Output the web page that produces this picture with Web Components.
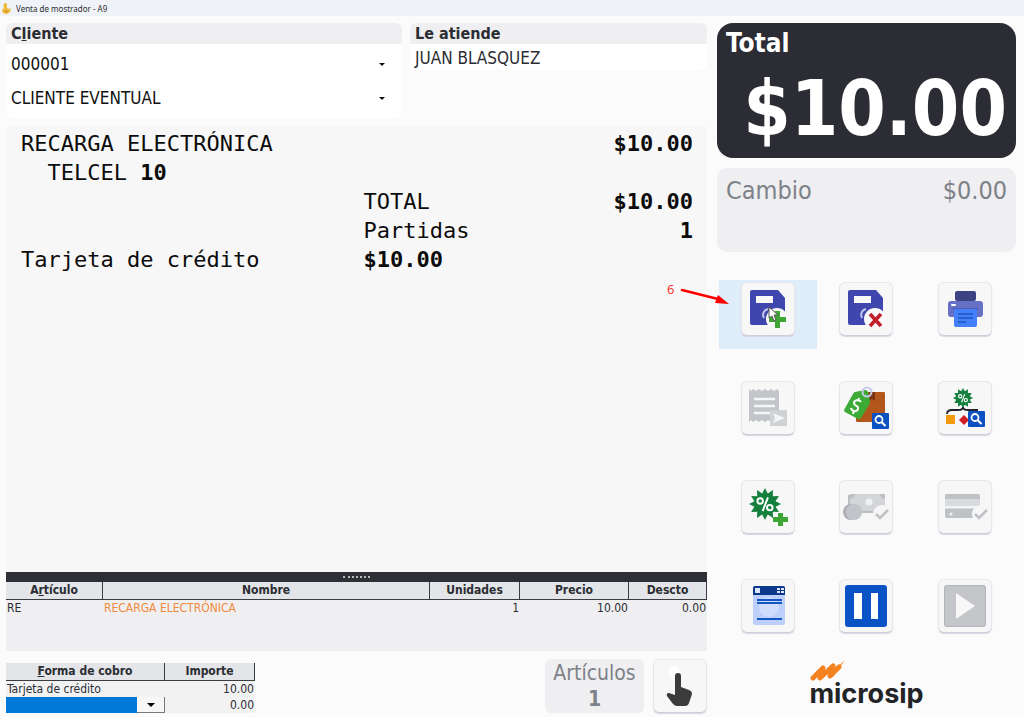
<!DOCTYPE html>
<html lang="es">
<head>
<meta charset="utf-8">
<meta name="viewport" content="width=device-width, initial-scale=1">
<title>Venta de mostrador - A9</title>
<style>
    body {
        margin: 0;
        background: #fbfbfb;
        color: #2b2d33;
        font-family: "DejaVu Sans Condensed", "DejaVu Sans", sans-serif;
    }
</style>
</head>
<body>
<sale-window></sale-window>

<script>
// Starburst outline used by the discount icons
function burst(cx, cy, outer, inner, spikes) {
    const points = [];
    for (let i = 0; i < spikes * 2; i++) {
        const r = i % 2 ? inner : outer;
        const a = Math.PI * i / spikes - Math.PI / 2;
        points.push(`${(cx + r * Math.cos(a)).toFixed(1)},${(cy + r * Math.sin(a)).toFixed(1)}`);
    }
    return points.join(' ');
}

const floppy = `
    <path d="M10 7h26l7 8v25a2 2 0 0 1-2 2H10a2 2 0 0 1-2-2V9a2 2 0 0 1 2-2z" fill="#3f47ae"/>
    <path d="M14 13h17v7H14z" fill="#f8f8fa"/>
    <path d="M26 26a6 6 0 0 0-4 9" fill="none" stroke="#c3c7ea" stroke-width="2"/>
    <circle cx="35" cy="36" r="11" fill="#f8f8f8"/>
`;
const percent = (x, y, s) => `
    <g transform="translate(${x} ${y}) scale(${s})" fill="none" stroke="#fff" stroke-width="1.6">
        <circle cx="-4" cy="-2.500" r="2.300"/>
        <circle cx="4" cy="3" r="2.300"/>
        <path d="M2.500-5.500L-2 6"/>
    </g>
`;
const search = (x, y) => `
    <g transform="translate(${x} ${y})">
        <rect width="17" height="16" rx="1" fill="#0b51c1"/>
        <circle cx="7" cy="6.500" r="3.500" fill="none" stroke="#fff" stroke-width="1.800"/>
        <path d="M9.500 9l4 4" stroke="#fff" stroke-width="2.200"/>
    </g>
`;
const check = `
    <circle cx="42" cy="33" r="9" fill="#f6f6f6"/>
    <path d="M36 33l4 4 8-8" fill="none" stroke="#bfc1c4" stroke-width="2.500"/>
`;

const icons = {
    save: `${floppy}<path d="M33 28h5v6h6v5h-6v6h-5v-6h-6v-5h6z" fill="#3fa535"/>`,
    discard: `${floppy}<path d="M30 31l11 12M41 31L30 43" stroke="#c0202c" stroke-width="3.600"/>`,
    print: `
        <rect x="16" y="8" width="21" height="10" rx="2" fill="#3b4383"/>
        <rect x="9" y="18" width="35" height="16" rx="3" fill="#6670c4"/>
        <rect x="12" y="21" width="5" height="2" rx="1" fill="#fff"/>
        <rect x="14" y="25" width="25" height="2" fill="#4c5bb4"/>
        <path d="M15 26h23v16a2 2 0 0 1-2 2H17a2 2 0 0 1-2-2z" fill="#4380fb"/>
        <path d="M19 31h15M19 35h15M19 39h8" stroke="#1f54bd" stroke-width="1.500"/>
    `,
    receipt: `
        <path d="M7 7l2 2 2-2 3 2 3-2 3 2 3-2 3 2 3-2 3 2 3-2 2 2V38l-2 2-3-2-3 2-3-2-3 2-3-2-3 2-3-2-3 2-2-2-2 2z" fill="#c2c5c9"/>
        <path d="M12 17h21M12 24h21M12 31h17" stroke="#f5f6f7" stroke-width="2.500"/>
        <rect x="28" y="28" width="17" height="16" fill="#cfd2d5"/>
        <path d="M31 31l12 5-12 5 2-5z" fill="#f3f4f5"/>
    `,
    price: `
        <rect x="16" y="10" width="29" height="30" rx="1" fill="#b3561b"/>
        <path d="M29 10h6v9l-3-2-3 2z" fill="#7d3410"/>
        <path d="M15 10l10-2a3 3 0 0 1 3 2l2 9q0 2-1 4l-8 13q-1 2-3 1L5 30q-1-1-1-2l9-16q1-2 2-2z" fill="#3caa35"/>
        <circle cx="27" cy="10" r="4.500" fill="none" stroke="#c5cbe8" stroke-width="2"/>
        <path d="M21 20c-2-3-7-2-7 1 0 4 5 2 4 6-1 3-6 3-7-1M19 16l-1 3M14 29l-1 3" fill="none" stroke="#fff" stroke-width="2"/>
        ${search(32, 31)}
    `,
    promos: `
        <polygon points="${burst(24, 16, 10, 7, 12)}" fill="#15803d"/>
        ${percent(24, 16, 0.7)}
        <path d="M8 32q0-4 5-4h6q5 0 5-3 0 3 5 3h10" fill="none" stroke="#22242c" stroke-width="1.800"/>
        <rect x="7" y="33" width="9" height="9" fill="#f29b0e"/>
        <path d="M25 33l5 5-5 5-5-5z" fill="#cf1c25"/>
        ${search(29, 29)}
    `,
    discount: `
        <polygon points="${burst(23, 23, 16, 11, 12)}" fill="#15803d"/>
        ${percent(23, 23, 1.2)}
        <path d="M36 32h5v4h5v5h-5v4h-5v-4h-5v-5h5z" fill="#3fa535"/>
    `,
    cash: `
        <rect x="8" y="14" width="36" height="18" fill="#b9bcc0"/>
        <rect x="10" y="13" width="35" height="17" fill="#d3d5d8"/>
        <path d="M10 13h5a5 5 0 0 1-5 5zM45 13v5a5 5 0 0 1-5-5zM45 30h-5a5 5 0 0 1 5-5z" fill="#bfc2c5"/>
        <circle cx="29" cy="21" r="3.500" fill="#f0f1f2"/>
        <circle cx="11" cy="31" r="8" fill="#adb0b4"/>
        <circle cx="14" cy="31" r="8" fill="#c1c4c8"/>
        ${check}
    `,
    card: `
        <rect x="6" y="13" width="35" height="24" rx="2" fill="#d8dadd"/>
        <path d="M6 15a2 2 0 0 1 2-2h31a2 2 0 0 1 2 2v3H6zM6 28h35v7a2 2 0 0 1-2 2H8a2 2 0 0 1-2-2z" fill="#bfc2c5"/>
        <path d="M6 25h35v2H6z" fill="#f3f4f5"/>
        <circle cx="12" cy="33" r="1.500" fill="#f3f4f5"/>
        ${check}
    `,
    drawer: `
        <rect x="11" y="6" width="32" height="39" rx="2" fill="#bcd0fb"/>
        <circle cx="27" cy="27" r="10" fill="#d0dcfd"/>
        <path d="M13 6h28a2 2 0 0 1 2 2v7H11V8a2 2 0 0 1 2-2z" fill="#0b3a8c"/>
        <path d="M13 8h5v5h-5zM35 8h3v2h-3zM39 8h3v2h-3zM35 11h3v2h-3zM39 11h3v2h-3z" fill="#dbe6fd"/>
        <path d="M15 20h25M15 23h25M15 39h25" stroke="#1457c4" stroke-width="1.800"/>
    `,
    pause: `
        <rect x="5" y="5" width="42" height="42" rx="3" fill="#0a53c4"/>
        <path d="M14 13h8v26h-8zM31 13h7v26h-7z" fill="#fff"/>
    `,
    play: `
        <rect x="5" y="5" width="42" height="42" rx="3" fill="#b1b4b8"/>
        <rect x="6" y="6" width="40" height="40" rx="2" fill="#c4c6ca"/>
        <path d="M17 13l19 13-19 13z" fill="#f8f8f8"/>
    `,
    touch: `
        <rect x="15" y="6" width="10" height="12" rx="4" fill="#fff"/>
        <path d="M21 16a3 3 0 0 1 6 0v11l8 3q3 1 3 4l-3 9q-1 3-4 3h-8q-2 0-4-2l-6-8q-1-3 2-3l6 2z" fill="#3b3b3b"/>
    `,
};

class TitleBar extends HTMLElement {
    static get tagName() {
        return 'title-bar';
    }
    constructor() {
        super();
        this.attachShadow({mode: 'open'}).innerHTML = `
            <svg width="10" height="12" viewBox="0 0 10 12" aria-hidden="true">
                <path d="M2 2q1-2 3 0l0 4 2 1 2-1-1 4-3 2-4-1q-2-3 0-4 2-2 0-3z" fill="#f0b93c"/>
                <path d="M3 8l3 1-2 2z" fill="#c98a22"/>
            </svg>
            <slot></slot>
            <style>
                :host {
                    display: flex;
                    align-items: center;
                    gap: 4px;
                    height: 16px;
                    padding-left: 2px;
                    background: #eff2f6;
                    font: 8px "Noto Sans", sans-serif;
                }
            </style>
        `;
    }
}
customElements.define(TitleBar.tagName, TitleBar);

class InfoPanel extends HTMLElement {
    static get tagName() {
        return 'info-panel';
    }
    constructor() {
        super();
        this.attachShadow({mode: 'open'}).innerHTML = `
            <header><slot name="heading"></slot></header>
            <section><slot></slot></section>
            <style>
                :host { display: block; background: #fff; border-radius: 6px; overflow: hidden; }
                header {
                    padding-left: 5px;
                    background: #efeff1;
                    font-size: 16px;
                    font-weight: bold;
                    line-height: 21px;
                }
                section { padding: 3px 5px 0; font-size: 17px; line-height: 23px; }
                ::slotted(pick-field:last-child) { margin-bottom: 3px; }
            </style>
        `;
    }
}
customElements.define(InfoPanel.tagName, InfoPanel);

class PickField extends HTMLElement {
    static get tagName() {
        return 'pick-field';
    }
    constructor() {
        super();
        this.attachShadow({mode: 'open'}).innerHTML = `
            <select aria-label="${this.getAttribute('label')}">
                <option>${this.getAttribute('value')}</option>
            </select>
            <i></i>
            <style>
                :host { display: grid; grid-template-columns: 1fr 18px; align-items: center; height: 34px; }
                select {
                    grid-area: 1 / 1 / 2 / 3;
                    appearance: none;
                    width: 100%;
                    height: 34px;
                    padding: 0;
                    border: 0;
                    background: none;
                    color: #111;
                    font: inherit;
                }
                i {
                    grid-area: 1 / 2;
                    pointer-events: none;
                    width: 0;
                    border: 3px solid transparent;
                    border-top-color: #111;
                    border-bottom: 0;
                }
            </style>
        `;
    }
}
customElements.define(PickField.tagName, PickField);

class SaleTicket extends HTMLElement {
    static get tagName() {
        return 'sale-ticket';
    }
    constructor() {
        super();
        this.attachShadow({mode: 'open'}).innerHTML = `
            <p><span>RECARGA ELECTRÓNICA</span><span></span><b>$10.00</b></p>
            <p><span class="detail">TELCEL <b>10</b></span></p>
            <p><span></span><span>TOTAL</span><b>$10.00</b></p>
            <p><span></span><span>Partidas</span><b>1</b></p>
            <p><span>Tarjeta de crédito</span><span><b>$10.00</b></span></p>
            <style>
                :host {
                    display: block;
                    padding: 3px 14px 3px 15px;
                    background: #f7f7f7;
                    color: #0c0c0c;
                    font: 22px/29px "DejaVu Sans Mono", monospace;
                }
                p { display: grid; grid-template-columns: 26fr 12fr 13fr; margin: 0; white-space: nowrap; }
                p > b { text-align: right; }
                .detail { padding-left: 2ch; }
            </style>
        `;
    }
}
customElements.define(SaleTicket.tagName, SaleTicket);

// Header and cell look shared by both tables
const tableStyles = `
    table { width: 100%; border-collapse: separate; border-spacing: 0; table-layout: fixed; }
    th, td { padding: 0 1px; font-size: 12px; line-height: 16px; text-align: right; white-space: nowrap; }
    th {
        border: solid #3a3c42;
        border-width: 0 1px 1px 0;
        background: #e3e5e8;
        line-height: 17px;
        text-align: center;
    }
    td:first-child { text-align: left; }
`;

class ItemTable extends HTMLElement {
    static get tagName() {
        return 'item-table';
    }
    constructor() {
        super();
        this.attachShadow({mode: 'open'}).innerHTML = `
            <div class="splitter"></div>
            <table>
                <colgroup><col class="code"><col><col class="units"><col class="price"><col class="off"></colgroup>
                <thead>
                    <tr><th>A<u>r</u>tículo</th><th>Nombre</th><th>Unidades</th><th>Precio</th><th>Descto</th></tr>
                </thead>
                <tbody>
                    <tr><td>RE</td><td class="name">RECARGA ELECTRÓNICA</td><td>1</td><td>10.00</td><td>0.00</td></tr>
                </tbody>
            </table>
            <style>
                ${tableStyles}
                :host { display: block; min-height: 79px; background: #efeff1; }
                .splitter { display: grid; place-items: center; height: 10px; background: #2e3036; }
                .splitter::after { content: ""; width: 27px; border-top: 2px dotted #bbb; }
                .code { width: 97px; }
                .units { width: 90px; }
                .price { width: 109px; }
                .off { width: 78px; }
                td.name { color: #f08a3c; text-align: left; }
            </style>
        `;
    }
}
customElements.define(ItemTable.tagName, ItemTable);

class PaymentTable extends HTMLElement {
    static get tagName() {
        return 'payment-table';
    }
    constructor() {
        super();
        this.attachShadow({mode: 'open'}).innerHTML = `
            <table>
                <colgroup><col><col class="amount"></colgroup>
                <thead><tr><th><u>F</u>orma de cobro</th><th>Importe</th></tr></thead>
                <tbody>
                    <tr><td>Tarjeta de crédito</td><td>10.00</td></tr>
                    <tr>
                        <td class="entry">
                            <div>
                                <select aria-label="Forma de cobro"><option></option></select>
                                <span><i></i></span>
                            </div>
                        </td>
                        <td>0.00</td>
                    </tr>
                </tbody>
            </table>
            <style>
                ${tableStyles}
                :host { display: block; width: 249px; background: #f2f2f3; }
                .amount { width: 90px; }
                td.entry { padding: 0; }
                .entry div { display: grid; grid-template-columns: 1fr 28px; height: 16px; }
                select {
                    grid-area: 1 / 1 / 2 / 3;
                    appearance: none;
                    height: 16px;
                    padding: 0;
                    border: 0;
                    border-radius: 0;
                    background: #0078d7;
                    font: inherit;
                }
                .entry span {
                    grid-area: 1 / 2;
                    display: grid;
                    place-items: center;
                    border: solid #77797d;
                    border-width: 0 1px 1px 0;
                    background: #f7f7f7;
                    pointer-events: none;
                }
                i { border: 4px solid transparent; border-top-color: #000; border-bottom: 0; }
            </style>
        `;
    }
}
customElements.define(PaymentTable.tagName, PaymentTable);

class ActionButton extends HTMLElement {
    static get tagName() {
        return 'action-button';
    }
    constructor() {
        super();
        this.attachShadow({mode: 'open'}).innerHTML = `
            <button type="button" aria-label="${this.getAttribute('label')}">
                <svg width="52" height="52" viewBox="0 0 52 52" aria-hidden="true">${icons[this.getAttribute('icon')]}</svg>
            </button>
            <slot></slot>
            <style>
                :host { display: grid; justify-content: center; align-content: start; }
                :host([active]) { position: relative; background: #dfedfb; }
                button {
                    width: 54px;
                    height: 54px;
                    padding: 0;
                    border: 1px solid #e6e6ec;
                    border-bottom-color: #cfcfdb;
                    border-radius: 6px;
                    background: #f7f7f8;
                    box-shadow: 0 1px 1px #d6d6e0;
                }
                svg { display: block; }
            </style>
        `;
    }
}
customElements.define(ActionButton.tagName, ActionButton);

// Red step number with an arrow, plus the mouse pointer, laid over a button
class StepMarker extends HTMLElement {
    static get tagName() {
        return 'step-marker';
    }
    constructor() {
        super();
        this.attachShadow({mode: 'open'}).innerHTML = `
            <slot></slot>
            <svg width="112" height="42" viewBox="0 0 112 42" aria-hidden="true">
                <path d="M15 8l36 9" stroke="#f00" stroke-width="2.500" stroke-linecap="round"/>
                <path d="M62 22l-14-1 3-8z" fill="#f00"/>
                <path d="M102 25v11l3-2 2 5 2-1-2-5h4z" fill="#fff" stroke="#555" stroke-width="1"/>
            </svg>
            <style>
                :host {
                    position: absolute;
                    top: 2px;
                    left: -52px;
                    display: block;
                    color: #f33;
                    font: 13px/14px "Noto Sans", sans-serif;
                    pointer-events: none;
                }
                svg { position: absolute; top: 0; left: 0; }
            </style>
        `;
    }
}
customElements.define(StepMarker.tagName, StepMarker);

class TotalBoard extends HTMLElement {
    static get tagName() {
        return 'total-board';
    }
    constructor() {
        super();
        this.attachShadow({mode: 'open'}).innerHTML = `
            <section class="total">
                <h2>Total</h2>
                <output>$10.00</output>
            </section>
            <section class="change">
                <span>Cambio</span><span>$0.00</span>
            </section>
            <style>
                :host { display: grid; gap: 10px; }
                section { padding: 6px 9px; }
                .total { height: 123px; border-radius: 16px; background: #2c2d34; color: #fff; font-weight: bold; }
                h2 { margin: 0; font-size: 26px; line-height: 29px; }
                output { display: block; font-size: 76px; line-height: 101px; text-align: right; }
                .change {
                    display: flex;
                    justify-content: space-between;
                    height: 72px;
                    border-radius: 10px;
                    background: #efeff1;
                    color: #7d8188;
                    font-size: 25px;
                    line-height: 34px;
                }
            </style>
        `;
    }
}
customElements.define(TotalBoard.tagName, TotalBoard);

class BrandLogo extends HTMLElement {
    static get tagName() {
        return 'brand-logo';
    }
    constructor() {
        super();
        this.attachShadow({mode: 'open'}).innerHTML = `
            <svg width="38" height="21" viewBox="0 0 38 21" aria-hidden="true">
                <path d="M4 18L14 8l-3 10L24 6l-3 10L30 7" fill="none" stroke="#f58220" stroke-width="5" stroke-linejoin="round" stroke-linecap="round"/>
                <path d="M19 16L36 0 24 17z" fill="#f58220"/>
            </svg>
            <span>microsip</span>
            <style>
                :host { display: grid; justify-self: center; }
                span { font: bold 27px/26px Inter, sans-serif; color: #222426; }
            </style>
        `;
    }
}
customElements.define(BrandLogo.tagName, BrandLogo);

class SaleWindow extends HTMLElement {
    static get tagName() {
        return 'sale-window';
    }
    constructor() {
        super();
        this.attachShadow({mode: 'open'}).innerHTML = `
            <title-bar>Venta de mostrador - A9</title-bar>
            <main>
                <div class="sale">
                    <div class="people">
                        <info-panel>
                            <span slot="heading">C<u>l</u>iente</span>
                            <pick-field label="Clave del cliente" value="000001"></pick-field>
                            <pick-field label="Nombre del cliente" value="CLIENTE EVENTUAL"></pick-field>
                        </info-panel>
                        <info-panel><span slot="heading">Le atiende</span>JUAN BLASQUEZ</info-panel>
                    </div>
                    <sale-ticket></sale-ticket>
                    <item-table></item-table>
                    <footer>
                        <payment-table></payment-table>
                        <div class="count">Artículos<b>1</b></div>
                        <action-button icon="touch" label="Modo táctil"></action-button>
                    </footer>
                </div>
                <aside>
                    <total-board></total-board>
                    <nav>
                        <action-button active icon="save" label="Guardar"><step-marker>6</step-marker></action-button>
                        <action-button icon="discard" label="Cancelar"></action-button>
                        <action-button icon="print" label="Imprimir"></action-button>
                        <action-button icon="receipt" label="Enviar ticket"></action-button>
                        <action-button icon="price" label="Consultar precio"></action-button>
                        <action-button icon="promos" label="Consultar promociones"></action-button>
                        <action-button icon="discount" label="Agregar descuento"></action-button>
                        <action-button icon="cash" label="Cobrar en efectivo"></action-button>
                        <action-button icon="card" label="Cobrar con tarjeta"></action-button>
                        <action-button icon="drawer" label="Abrir ventana"></action-button>
                        <action-button icon="pause" label="Pausar venta"></action-button>
                        <action-button icon="play" label="Reanudar venta"></action-button>
                    </nav>
                    <brand-logo></brand-logo>
                </aside>
            </main>
            <style>
                :host { display: flex; flex-direction: column; min-height: 100vh; }
                main {
                    flex: 1;
                    display: grid;
                    grid-template-columns: 1fr 299px;
                    gap: 10px;
                    padding: 7px 8px 4px 6px;
                }
                .sale { display: flex; flex-direction: column; }
                .people { display: grid; grid-template-columns: 4fr 3fr; gap: 8px; align-items: start; margin-bottom: 8px; }
                sale-ticket { flex: 1; }
                footer { display: flex; align-items: flex-end; gap: 9px; padding-top: 8px; }
                .count {
                    display: grid;
                    align-content: center;
                    width: 99px;
                    height: 54px;
                    margin-left: auto;
                    border-radius: 6px;
                    background: #efeff1;
                    color: #7d8188;
                    font-size: 21px;
                    line-height: 26px;
                    text-align: center;
                }
                aside { display: grid; align-content: start; }
                nav {
                    display: grid;
                    grid-template-columns: repeat(3, 1fr);
                    grid-auto-rows: 69px;
                    gap: 30px 0;
                    margin-top: 28px;
                    padding: 0 2px;
                }
                nav action-button { padding-top: 2px; box-sizing: border-box; }
                brand-logo { margin-top: 14px; }
            </style>
        `;
    }
}
customElements.define(SaleWindow.tagName, SaleWindow);
</script>
</body>
</html>
